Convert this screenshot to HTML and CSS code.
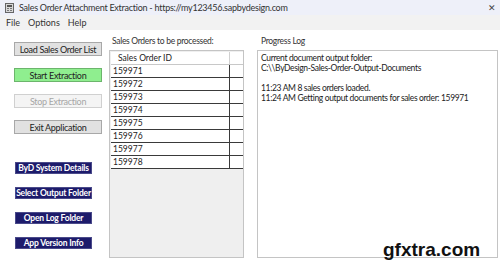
FILE: index.html
```html
<!DOCTYPE html>
<html lang="en">
<head>
    <meta charset="UTF-8">
    <title>Sales Order Attachment Extraction</title>
    <link rel="stylesheet" href="styles.css">
</head>
<body>
    <div class="window">
        <div class="titlebar">
            <svg class="app-icon" width="9" height="10" viewBox="0 0 9 10">
                <rect x="0.5" y="0.5" width="8" height="9" fill="#d8d8d8" stroke="#666"/>
                <rect x="2" y="2" width="5" height="2" fill="#555"/>
                <rect x="2" y="5" width="2" height="1" fill="#777"/>
                <rect x="5" y="5" width="2" height="1" fill="#777"/>
                <rect x="2" y="7" width="2" height="1" fill="#777"/>
                <rect x="5" y="7" width="2" height="1" fill="#777"/>
            </svg>
            <span class="title">Sales Order Attachment Extraction - https://my123456.sapbydesign.com</span>
            <span class="close">✕</span>
        </div>
        <div class="menubar">
            <span>File</span>
            <span>Options</span>
            <span>Help</span>
        </div>
        <div class="main">
            <div class="left">
                <div class="actions">
                    <button class="btn">Load Sales Order List</button>
                    <button class="btn start">Start Extraction</button>
                    <button class="btn" disabled>Stop Extraction</button>
                    <button class="btn">Exit Application</button>
                </div>
                <div class="tools">
                    <button class="tool">ByD System Details</button>
                    <button class="tool">Select Output Folder</button>
                    <button class="tool">Open Log Folder</button>
                    <button class="tool">App Version Info</button>
                </div>
            </div>
            <div class="orders">
                <div class="label">Sales Orders to be processed:</div>
                <div class="grid">
                    <div class="row head"><span class="cell">Sales Order ID</span><span class="end"></span></div>
                    <div class="row"><span class="cell">159971</span><span class="end"></span></div>
                    <div class="row"><span class="cell">159972</span><span class="end"></span></div>
                    <div class="row"><span class="cell">159973</span><span class="end"></span></div>
                    <div class="row"><span class="cell">159974</span><span class="end"></span></div>
                    <div class="row"><span class="cell">159975</span><span class="end"></span></div>
                    <div class="row"><span class="cell">159976</span><span class="end"></span></div>
                    <div class="row"><span class="cell">159977</span><span class="end"></span></div>
                    <div class="row"><span class="cell">159978</span><span class="end"></span></div>
                </div>
            </div>
            <div class="log">
                <div class="label">Progress Log</div>
                <div class="logbox">
                    <div>Current document output folder:</div>
                    <div>C:\\ByDesign-Sales-Order-Output-Documents</div>
                    <div>&nbsp;</div>
                    <div>11:23 AM 8 sales orders loaded.</div>
                    <div>11:24 AM Getting output documents for sales order: 159971</div>
                </div>
            </div>
        </div>
        <div class="watermark">gfxtra.com</div>
    </div>
</body>
</html>
```

FILE: styles.css
```css
* {
    margin: 0;
    padding: 0;
    box-sizing: border-box;
}

body {
    background-color: #fff;
    font-family: Lato, 'Noto Sans', sans-serif;
    font-size: 9px;
    color: #222;
}

.window {
    width: 500px;
    height: 270px;
    position: relative;
    overflow: hidden;
}

.titlebar {
    height: 15px;
    background-color: #eef0f9;
    display: flex;
    align-items: center;
    padding-left: 5px;
}

.app-icon {
    margin-right: 5px;
}

.title {
    font-size: 9px;
    color: #333;
    letter-spacing: -0.25px;
}

.close {
    margin-left: auto;
    margin-right: 4px;
    font-size: 9px;
    color: #444;
}

.menubar {
    height: 15px;
    background-color: #f2f2f2;
    display: flex;
    align-items: center;
    gap: 8px;
    padding-left: 6px;
    font-size: 9px;
    color: #333;
}

.main {
    display: flex;
    height: 240px;
}

.left {
    width: 108px;
    padding: 12px 0 0 14px;
}

.actions, .tools {
    display: flex;
    flex-direction: column;
}

.actions {
    gap: 12px;
}

.btn {
    width: 88px;
    height: 14px;
    font-family: inherit;
    font-size: 9px;
    letter-spacing: -0.3px;
    color: #222;
    background-color: #e1e1e1;
    border: 1px solid #a8a8a8;
}

.btn.start {
    background-color: #8fee8f;
    border-color: #6cb56c;
}

.btn:disabled {
    background-color: #f4f4f4;
    border-color: #d0d0d0;
    color: #a6a6a6;
}

.tools {
    margin-top: 28px;
    gap: 13px;
    padding-left: 1px;
}

.tool {
    width: 77px;
    height: 12px;
    font-family: inherit;
    font-size: 8.5px;
    font-weight: bold;
    letter-spacing: -0.2px;
    color: #fff;
    background-color: #1d1b6b;
    border: 1px solid #4a4a8a;
}

.orders {
    width: 135px;
    margin-left: 1px;
}

.label {
    height: 20px;
    padding: 6px 0 0 3px;
    font-size: 8.5px;
    letter-spacing: -0.3px;
    color: #333;
}

.grid {
    height: 208px;
    background-color: #efefef;
    border: 1px solid #c4c4c4;
    padding: 1px 0 0 1px;
}

.row {
    display: flex;
    height: 13px;
    background-color: #fff;
    border-bottom: 1px solid #3a3a3a;
    width: 132px;
}

.row .cell {
    width: 119px;
    padding-left: 2px;
    line-height: 12px;
    font-size: 8.5px;
    border-right: 1px solid #3a3a3a;
}

.row.head {
    border-bottom: 1px solid #c8c8c8;
}

.row.head .cell {
    padding-left: 7px;
    border-right-color: #d0d0d0;
}

.log {
    width: 241px;
    margin-left: 13px;
}

.log .label {
    padding-left: 4px;
}

.logbox {
    height: 208px;
    border: 1px solid #c4c4c4;
    padding: 2px 0 0 3px;
    font-size: 8.5px;
    letter-spacing: -0.35px;
    line-height: 10px;
    color: #222;
}

.watermark {
    position: absolute;
    left: 383px;
    top: 239px;
    font-family: 'Liberation Sans', sans-serif;
    font-weight: bold;
    font-size: 19px;
    color: #111;
}
```
